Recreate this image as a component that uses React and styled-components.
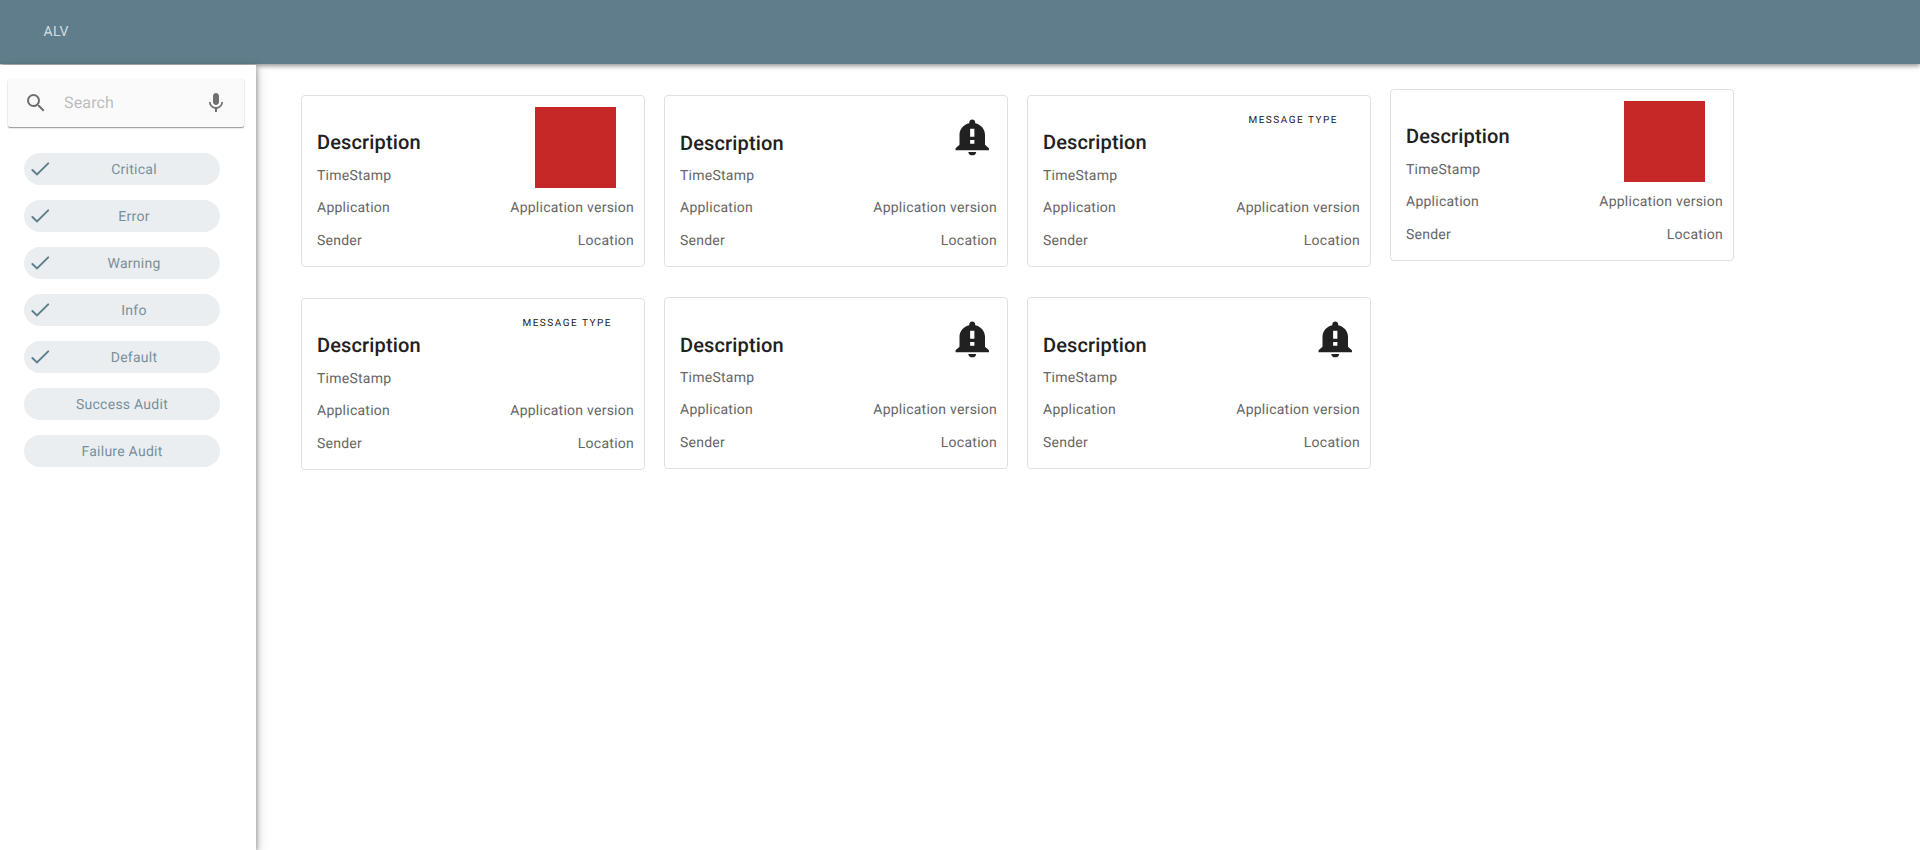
import React from "react";
import styled, { createGlobalStyle } from "styled-components";

const GlobalStyle = createGlobalStyle`
  *, *::before, *::after { box-sizing: border-box; }
  body {
    margin: 0;
    background: #fff;
    font-family: Roboto, "Liberation Sans", sans-serif;
    text-rendering: geometricPrecision;
    overflow: hidden;
  }
`;

const Page = styled.div`
  display: flex;
  flex-direction: column;
  height: 100vh;
`;

const AppBar = styled.header`
  flex: none;
  height: 64px;
  padding: 22px 43.5px 0;
  background: #607d8b;
  box-shadow: 0 2px 4px rgba(0, 0, 0, 0.3), 0 2px 6px rgba(0, 0, 0, 0.15);
  color: rgba(255, 255, 255, 0.74);
  font-size: 14px;
  line-height: 20px;
  letter-spacing: 0.25px;
`;

const Body = styled.div`
  flex: 1;
  display: flex;
  min-height: 0;
`;

const Sidebar = styled.aside`
  position: relative;
  flex: none;
  width: 256px;
  margin-top: 1px;
  padding: 14px 12px 0 8px;
  background: #fff;
  box-shadow: 1px 2px 5px rgba(0, 0, 0, 0.34), 2px 4px 12px rgba(0, 0, 0, 0.14);
`;

const SearchBox = styled.div`
  display: flex;
  align-items: center;
  height: 48px;
  padding: 0 16px;
  border-radius: 2px;
  background: #fafafa;
  box-shadow: 0 1px 1px rgba(0, 0, 0, 0.3), 0 1px 2px rgba(0, 0, 0, 0.18);
`;

const SearchText = styled.span`
  flex: 1;
  padding-left: 16px;
  color: #bdbdbd;
  font-size: 16px;
  line-height: 24px;
  letter-spacing: 0.15px;
`;

const Icon = styled.svg`
  display: block;
  flex: none;
  width: ${(p) => p.$width || 24}px;
  height: ${(p) => p.$height || 24}px;
  fill: ${(p) => p.$color || "#6f6f6f"};
`;

const FilterList = styled.div`
  display: flex;
  flex-direction: column;
  gap: 15px;
  margin: 26px 0 0 16px;
`;

const Chip = styled.div`
  display: flex;
  align-items: center;
  width: 196px;
  height: 32px;
  padding: 0 4px;
  border-radius: 16px;
  background: #ebeef1;
`;

const ChipLabel = styled.span`
  flex: 1;
  padding-top: 2px;
  text-align: center;
  color: #78909c;
  font-size: 14px;
  line-height: 20px;
  letter-spacing: 0.25px;
`;

const CardGrid = styled.main`
  display: grid;
  grid-template-columns: repeat(4, 344px);
  grid-auto-rows: 172px;
  gap: 30px 19px;
  align-content: start;
  padding: 31px 0 0 45px;
`;

const Card = styled.article`
  display: flex;
  flex-direction: column;
  height: 172px;
  margin-top: ${(p) => p.$shift || 0}px;
  padding: 0 10px 0 15px;
  border: 1px solid #e0e0e0;
  border-radius: 4px;
  background: #fff;
`;

const CardTop = styled.div`
  display: flex;
  justify-content: space-between;
  height: 100px;
`;

const Heading = styled.div`
  padding-top: ${(p) => p.$offset || 0}px;
`;

const Title = styled.h2`
  margin: 34px 0 0;
  color: #212121;
  font-size: 20px;
  font-weight: 500;
  line-height: 24px;
  letter-spacing: 0.15px;
`;

const Text = styled.p`
  margin: 0;
  color: #666;
  font-size: 14px;
  line-height: 20px;
  letter-spacing: 0.25px;
`;

const Stamp = styled(Text)`
  margin-top: ${(p) => 12 - (p.$offset || 0)}px;
`;

const Swatch = styled.div`
  width: 81px;
  height: 81px;
  margin: 11px 18px 0 0;
  background: #c62828;
`;

const MessageType = styled.div`
  margin: 17px 22px 0 0;
  color: #212121;
  font-size: 10px;
  line-height: 16px;
  letter-spacing: 1.5px;
`;

const BellHolder = styled.div`
  margin: 20px 2.5px 0 0;
`;

const Row = styled.div`
  display: flex;
  justify-content: space-between;
  margin-top: ${(p) => p.$gap}px;
`;

const Search = () => (
  <Icon viewBox="0 0 24 24">
    <path d="M15.5 14h-.79l-.28-.27A6.471 6.471 0 0 0 16 9.5 6.5 6.5 0 1 0 9.5 16c1.61 0 3.09-.59 4.23-1.57l.27.28v.79l5 4.99L20.49 19l-4.99-5zm-6 0C7.01 14 5 11.99 5 9.5S7.01 5 9.5 5 14 7.01 14 9.5 11.99 14 9.5 14z" />
  </Icon>
);

const Mic = () => (
  <Icon viewBox="0 0 24 24">
    <path d="M12 14c1.66 0 2.99-1.34 2.99-3L15 5c0-1.66-1.34-3-3-3S9 3.34 9 5v6c0 1.66 1.34 3 3 3zm5.3-3c0 3-2.54 5.1-5.3 5.1S6.7 14 6.7 11H5c0 3.41 2.72 6.23 6 6.72V21h2v-3.28c3.28-.48 6-3.3 6-6.72h-1.7z" />
  </Icon>
);

const Check = () => (
  <Icon viewBox="0 0 24 24" $color="none">
    <path d="M4.4 13L9 17.4 20.2 6.4" stroke="#607d8b" strokeWidth="2" strokeLinecap="round" strokeLinejoin="miter" />
  </Icon>
);

const Bell = () => (
  <Icon viewBox="0 0 24 24" preserveAspectRatio="none" $width={44.5} $height={41} $color="#212121">
    <path d="M9.85 21.01c0 1.1.96 1.99 2.15 1.99s2.15-.89 2.15-1.99h-4.3zM18.88 16.82V11c0-3.25-2.25-5.97-5.29-6.69v-.72C13.59 2.71 12.88 2 12 2s-1.59.71-1.59 1.59v.72C7.37 5.03 5.12 7.75 5.12 11v5.82L3 18.94V20h18v-1.06l-2.12-2.12zM13.15 16.3h-2.3v-2.3h2.3v2.3zm0-4.2h-2.3V7.5h2.3v4.6z" />
  </Icon>
);

const filters = [
  ["Critical", true],
  ["Error", true],
  ["Warning", true],
  ["Info", true],
  ["Default", true],
  ["Success Audit", false],
  ["Failure Audit", false],
];

const cards = [
  { kind: "swatch" },
  { kind: "bell", offset: 1 },
  { kind: "label" },
  { kind: "swatch", shift: -6 },
  { kind: "label", shift: 1 },
  { kind: "bell", offset: 1 },
  { kind: "bell", offset: 1 },
];

const marks = {
  swatch: <Swatch />,
  bell: (
    <BellHolder>
      <Bell />
    </BellHolder>
  ),
  label: <MessageType>MESSAGE TYPE</MessageType>,
};

const MessageCard = ({ kind, shift, offset }) => (
  <Card $shift={shift}>
    <CardTop>
      <Heading $offset={offset}>
        <Title>Description</Title>
        <Stamp $offset={offset}>TimeStamp</Stamp>
      </Heading>
      {marks[kind]}
    </CardTop>
    <Row $gap={2}>
      <Text>Application</Text>
      <Text>Application version</Text>
    </Row>
    <Row $gap={13}>
      <Text>Sender</Text>
      <Text>Location</Text>
    </Row>
  </Card>
);

export default function App() {
  return (
    <Page>
      <GlobalStyle />
      <AppBar>ALV</AppBar>
      <Body>
        <Sidebar>
          <SearchBox>
            <Search />
            <SearchText>Search</SearchText>
            <Mic />
          </SearchBox>
          <FilterList>
            {filters.map(([label, on]) => (
              <Chip key={label}>
                {on && <Check />}
                <ChipLabel>{label}</ChipLabel>
              </Chip>
            ))}
          </FilterList>
        </Sidebar>
        <CardGrid>
          {cards.map((card, i) => (
            <MessageCard key={i} {...card} />
          ))}
        </CardGrid>
      </Body>
    </Page>
  );
}
